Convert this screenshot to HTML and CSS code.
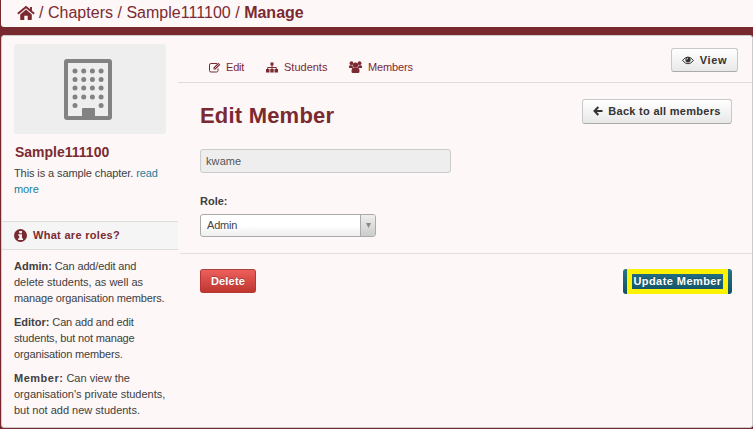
FILE: index.html
```
<!DOCTYPE html>
<html lang="en">
<head>
<meta charset="utf-8">
<title>Manage chapter</title>
<link rel="stylesheet" href="styles.css">
</head>
<body>
<nav class="crumbs">
  <svg class="home" width="18" height="16" viewBox="0 0 18 16"><path d="M9 4.600 14.800 9.400V14.200q0 .8-.8.8H10.700V10.800H7.300V15H4Q3.200 15 3.200 14.200V9.400Z"/><path d="M.8 8.700 9 1.900 17.200 8.700M14 2V6" fill="none" stroke="#7b2a32" stroke-width="1.900"/></svg>
  <span class="path">/ Chapters / Sample111100 / </span><b>Manage</b>
</nav>
<div class="panel">
  <aside>
    <div class="photo">
      <svg width="48" height="62" viewBox="0 0 48 62"><rect x="2" y="2" width="44" height="57" rx="1" fill="#eee" stroke="#828282" stroke-width="4"/><g stroke="#828282" stroke-width="5" stroke-linecap="round" stroke-dasharray="0 8.700"><path d="M11 12H38M11 20.500H38M11 29H38M11 38H38"/><path d="M11 46.500H12M37.100 46.500H38"/></g><path d="M18 61V50q0-1 1-1H30q1 0 1 1V61Z" fill="#828282"/></svg>
    </div>
    <h2>Sample111100</h2>
    <p class="about">This is a sample chapter. <a>read<br>more</a></p>
    <h3><svg width="13" height="13" viewBox="0 0 13 13"><circle cx="6.500" cy="6.500" r="6.500"/><path d="M5.200 2H8V4.200H5.200ZM4.200 5.200H8V9.300H9V11H4.200V9.300H5.200V6.800H4.200Z" fill="#f5f5f5"/></svg><span>What are roles?</span></h3>
    <div class="roles">
      <p><b>Admin:</b><span class="tight"> Can add/edit and</span><br>delete students, as well as<br><span class="tight">manage organisation members.</span></p>
      <p><b>Editor:</b><span class="tight"> Can add and edit</span><br><span class="tight">students, but not manage</span><br><span class="tight">organisation members.</span></p>
      <p><b class="wide">Member:</b> Can view the<br>organisation's private students,<br>but not add new students.</p>
    </div>
  </aside>
  <main>
    <div class="tabs">
      <a class="tab edit"><svg width="12" height="11" viewBox="0 0 12 11"><path d="M8 1.500H2Q.5 1.500.5 3V8.500Q.5 10 2 10H7.500Q9 10 9 8.500V6.500" fill="none" stroke="#7b2a32"/><path d="M4.500 5.500 9.300.7 11.300 2.700 6.500 7.500H4.500Z"/><path d="M5.500 6.500 9.800 2.200" stroke="#fdf7f7" stroke-width=".7"/></svg><span>Edit</span></a>
      <a class="tab students"><svg width="12" height="11" viewBox="0 0 12 11"><path d="M4.500.5H7.500V3.500H4.500ZM0 7H3.500V10.500H0ZM4.300 7H7.700V10.500H4.300ZM8.500 7H12V10.500H8.500Z"/><path d="M6 3V8M1.700 8V5.500H10.300V8" fill="none" stroke="#7b2a32"/></svg><span>Students</span></a>
      <a class="tab members"><svg width="13" height="12" viewBox="0 0 13 12"><circle cx="2.500" cy="2.200" r="1.900"/><circle cx="10.500" cy="2.200" r="1.900"/><circle cx="6.500" cy="4" r="2.600"/><path d="M0 6.800V5Q.5 4 1.500 4.300L3.700 4.500Q3.500 5.500 4.200 6.500L2.800 7H.5ZM13 6.800V5Q12.500 4 11.500 4.300L9.300 4.500Q9.500 5.500 8.800 6.500L10.200 7H12.500ZM2.500 10.500Q2.500 6.500 4.500 6.500H8.500Q10.500 6.500 10.500 10.500 10.500 12 9 12H4Q2.500 12 2.500 10.500Z"/></svg><span class="tight">Members</span></a>
      <button class="btn view"><svg width="12" height="9" viewBox="0 0 12 9"><path d="M.5 4.500Q6-2.500 11.500 4.500 6 11 .5 4.500Z" fill="none" stroke="#333"/><circle cx="6" cy="3.800" r="2.600"/><path d="M4.700 3.800Q4.700 2.300 6 2.300" fill="none" stroke="#fff" stroke-width=".7"/></svg><span>View</span></button>
    </div>
    <form>
      <div class="heading"><h1>Edit Member</h1><button type="button" class="btn back"><svg width="10" height="10" viewBox="0 0 10 10"><path d="M5.300 1 1.500 5 5.300 9M2 5H9.500" fill="none" stroke="#333" stroke-width="2"/></svg><span>Back to all members</span></button></div>
      <div class="field"><span>kwame</span></div>
      <label>Role:</label>
      <div class="select"><span>Admin</span><i><svg width="5" height="5" viewBox="0 0 5 5"><path d="M0 0H5L2.500 5Z" fill="#888"/></svg></i></div>
    </form>
    <footer><button class="delete"><span>Delete</span></button><button class="update"><span>Update Member</span></button></footer>
  </main>
</div>
</body>
</html>
```
FILE: styles.css
```
* { box-sizing: border-box; }
body { margin: 0; width: 753px; height: 429px; overflow: hidden; background: #782930; font: 11px/16px "Liberation Sans", Arial, sans-serif; color: #404040; }
h1, h2, h3, p { margin: 0; }
h1, h2, h3 { color: #7b2a32; }
svg { display: block; flex: none; fill: #7b2a32; }
span, b { white-space: pre; }
button { font: bold 11px/16px "Liberation Sans", Arial, sans-serif; padding: 0; }
.tight { letter-spacing: -.15px; }
.wide { letter-spacing: .5px; }
.crumbs { height: 27px; margin-left: 1px; padding: 0 0 2px 16px; display: flex; align-items: center; background: #fdf7f7; border-radius: 0 0 0 3px; font-size: 16px; color: #7b2a32; }
.home { margin-right: 4px; }
.path { letter-spacing: .02px; }
.panel { display: flex; margin: 8px 0 0 1px; width: 752px; height: 393px; border: 1px solid #ccc; border-radius: 3px; background: #fdf7f7; }
aside { width: 176px; flex: none; }
.photo { width: 152px; height: 90px; margin: 8px 0 0 12px; padding: 15px 0 0 50px; background: #eee; border-radius: 3px; }
h2 { font-size: 14px; line-height: 18px; margin: 9px 0 0 13px; }
.about { margin: 4px 0 0 12px; letter-spacing: -.1px; }
.about a { color: #1b7e9b; }
h3 { display: flex; align-items: center; gap: 6px; height: 29px; margin-top: 24px; padding: 0 0 1px 12px; border: solid #ddd; border-width: 1px 0; background: #f5f5f5; font-size: 11px; letter-spacing: .3px; }
.roles { padding: 8px 0 0 12px; }
.roles p { margin-bottom: 8px; white-space: nowrap; }
main { flex: 1; }
.tabs { display: flex; height: 47px; border-bottom: 1px solid #ddd; padding-left: 31px; color: #7b2a32; }
.tab { display: flex; align-items: center; gap: 5px; height: 16px; margin-top: 23px; }
.edit { width: 57px; letter-spacing: -.2px; }
.students { width: 83px; gap: 6px; }
.members { gap: 6px; }
.btn { display: flex; align-items: center; justify-content: center; height: 25px; border: 1px solid #c8c8c8; border-bottom-color: #aaa; border-radius: 3px; background: linear-gradient(#fff, #e8e8e8); color: #333; padding-bottom: 1px; letter-spacing: .28px; }
.btn svg { fill: #333; }
.view { width: 67px; margin: 12px 14px 0 auto; gap: 6px; height: 24px; padding-bottom: 0; letter-spacing: .6px; }
form { height: 171px; padding: 16px 20px 0 20px; border-bottom: 1px solid #e3e0e0; margin-left: 2px; }
.heading { display: flex; justify-content: space-between; height: 50px; }
h1 { font-size: 22px; line-height: 34px; letter-spacing: .2px; }
.back { width: 150px; gap: 5px; }
.field { width: 251px; height: 24px; padding: 3px 5px; border: 1px solid #ccc; border-radius: 3px; background: #eee; color: #555; letter-spacing: .1px; }
label { display: block; margin-top: 20px; font-weight: bold; }
.select { display: flex; width: 176px; height: 23px; margin-top: 5px; border: 1px solid #aaa; border-radius: 3px; background: linear-gradient(#fff 50%, #eee); color: #444; }
.select span { flex: 1; padding: 2px 6px; letter-spacing: -.2px; }
.select i { width: 15px; display: flex; align-items: center; justify-content: center; border-left: 1px solid #aaa; border-radius: 0 2px 2px 0; background: linear-gradient(#eee, #ccc); }
footer { display: flex; justify-content: space-between; padding: 15px 20px 0 22px; }
.delete { width: 56px; height: 24px; border: 1px solid #b93632; border-top-color: #a94442; border-radius: 3px; background: linear-gradient(#ee5f5b, #bd362f); color: #fff; text-shadow: 0 -1px 0 rgba(0,0,0,.25); letter-spacing: .2px; }
.update { width: 109px; height: 25px; border: 0; padding: 0 4px; border-radius: 3px; background: linear-gradient(#27738a, #105064); color: #fff; text-shadow: 0 -1px 0 rgba(0,0,0,.25); letter-spacing: .43px; }
.update span { display: flex; align-items: center; justify-content: center; height: 25px; padding-bottom: 1px; border: 5px solid #fff200; }
```
